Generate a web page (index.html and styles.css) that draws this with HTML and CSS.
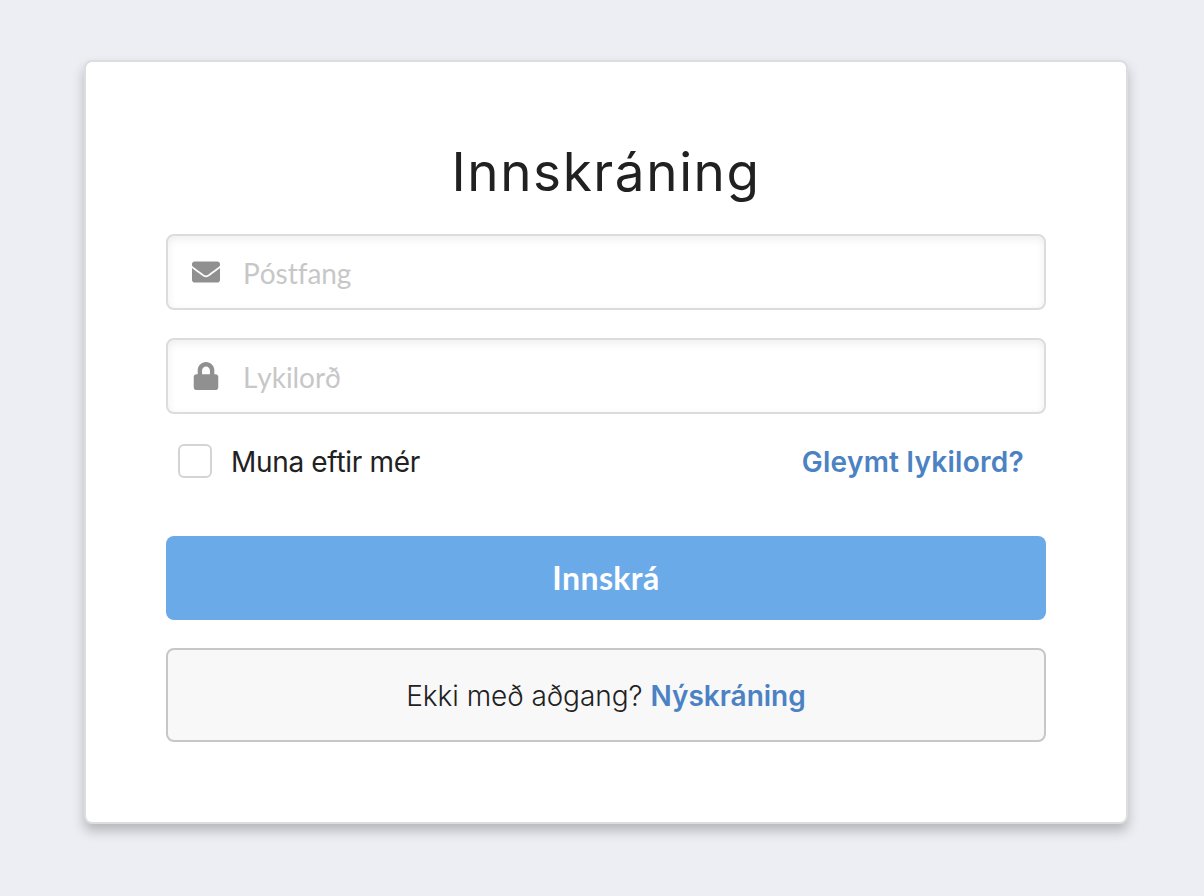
FILE: index.html
```html
<!DOCTYPE html>
<html lang="is">
<head>
<meta charset="utf-8">
<title>Innskráning</title>
<link rel="stylesheet" href="styles.css">
</head>
<body>
<main class="card">
  <h1 class="title">Innskráning</h1>
  <form class="form">
    <label class="field">
      <svg class="icon" viewBox="0 0 512 512"><path d="M502.3 190.8c3.9-3.1 9.7-.2 9.7 4.7V400c0 26.5-21.5 48-48 48H48c-26.5 0-48-21.5-48-48V195.6c0-5 5.7-7.8 9.7-4.7 22.4 17.4 52.1 39.5 154.1 113.6 21.1 15.4 56.7 47.8 92.2 47.6 35.7.3 72-32.8 92.3-47.6 102-74.1 131.6-96.3 154-113.7zM256 320c23.2.4 56.6-29.2 73.4-41.4 132.7-96.3 142.8-104.7 173.4-128.7 5.8-4.5 9.2-11.5 9.2-18.9v-19c0-26.5-21.5-48-48-48H48c-26.5 0-48 21.5-48 48v19c0 7.4 3.4 14.3 9.2 18.9 30.6 23.9 40.7 32.4 173.4 128.7 16.8 12.2 50.2 41.8 73.4 41.4z"/></svg>
      <input class="input" type="text" placeholder="Póstfang">
    </label>
    <label class="field">
      <svg class="icon" viewBox="-32 0 512 512"><path d="M400 224h-24v-72C376 68.2 307.8 0 224 0S72 68.2 72 152v72H48c-26.5 0-48 21.5-48 48v192c0 26.5 21.5 48 48 48h352c26.5 0 48-21.5 48-48V272c0-26.5-21.5-48-48-48zm-104 0H152v-72c0-39.7 32.3-72 72-72s72 32.3 72 72v72z"/></svg>
      <input class="input" type="password" placeholder="Lykilorð">
    </label>
    <div class="options">
      <label class="remember"><span class="box"></span><span class="remember-text">Muna eftir mér</span></label>
      <a class="link forgot">Gleymt lykilord?</a>
    </div>
    <button class="submit" type="button">Innskrá</button>
  </form>
  <div class="message"><span class="question">Ekki með aðgang?</span><a class="link signup">Nýskráning</a></div>
</main>
</body>
</html>
```
FILE: styles.css
```css
* { box-sizing: border-box; }
body {
  margin: 0;
  min-height: 896px;
  padding: 60px 76px 0 84px;
  background: #edeef3;
  font-family: Inter, sans-serif;
  font-variant-ligatures: none;
  font-feature-settings: "calt" 0;
  color: #212121;
}
.card {
  height: 764px;
  padding: 78px 80px 0;
  background: #fff;
  border: 2px solid #dcdddf;
  border-radius: 8px;
  box-shadow: 0 7px 12px rgba(34, 36, 38, .27);
}
.title {
  margin: 0;
  height: 94px;
  font-size: 53px;
  line-height: 64px;
  font-weight: 400;
  letter-spacing: 1.6px;
  text-align: center;
}
.form { display: flex; flex-direction: column; }
.field {
  display: flex;
  align-items: center;
  height: 76px;
  margin-bottom: 28px;
  padding: 0 23px 0 23.5px;
  border: 2px solid #dcdcdd;
  border-radius: 8px;
  box-shadow: inset 0 3px 8px rgba(34, 36, 38, .08);
}
.icon { width: 28px; height: 28px; fill: #909091; flex: none; margin-bottom: 1px; }
.input {
  flex: 1;
  margin: 0 0 0 23.5px;
  padding: 1px 0 0;
  border: 0;
  outline: 0;
  background: transparent;
  font: 28px Lato, sans-serif;
  font-kerning: none;
  font-variant-ligatures: none;
  letter-spacing: -.05px;
}
.input::placeholder { color: #c7c7c7; opacity: 1; }
.options {
  display: flex;
  justify-content: space-between;
  align-items: center;
  height: 38px;
  padding: 0 22px 0 12px;
  font-size: 28px;
}
.remember { display: flex; align-items: center; gap: 19px; }
.remember-text { padding-top: 2px; letter-spacing: -.33px; }
.box { width: 34px; height: 34px; border: 2px solid #d4d4d5; border-radius: 6px; }
.link { color: #4b82c3; font-weight: 600; }
.forgot { padding-top: 2px; letter-spacing: .27px; }
.submit {
  height: 84px;
  margin: 56px 0 28px;
  padding: 0 0 2px;
  border: 0;
  border-radius: 8px;
  background: #6aaae8;
  color: #fff;
  font: bold 32px Lato, sans-serif;
  letter-spacing: .4px;
}
.message {
  display: flex;
  justify-content: center;
  align-items: center;
  gap: 8px;
  height: 94px;
  padding-top: 2px;
  border: 2px solid #c6c7c8;
  border-radius: 8px;
  background: #f8f8f9;
  font-size: 28px;
}
.question { font-weight: 300; letter-spacing: -.05px; }
```
